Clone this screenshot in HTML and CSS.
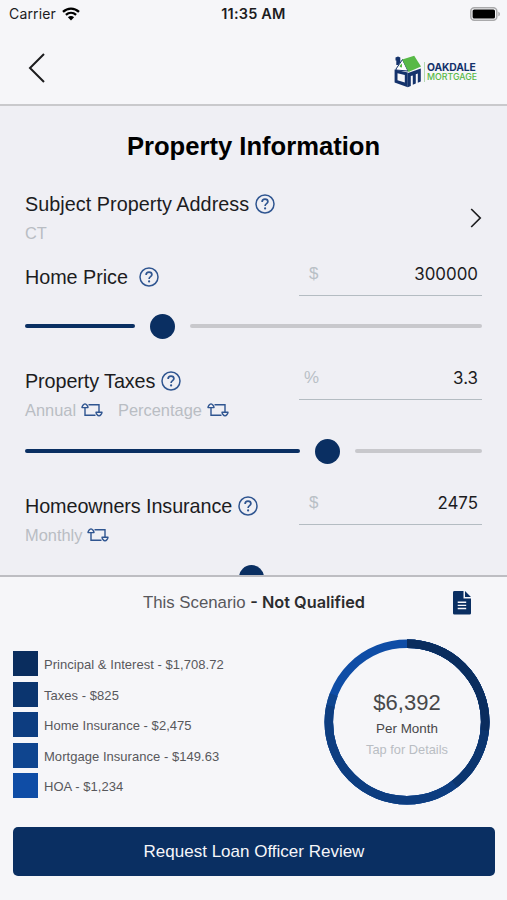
FILE: index.html
```html
<!DOCTYPE html>
<html lang="en">
<head>
  <meta charset="utf-8">
  <title>Property Information</title>
  <link rel="stylesheet" href="styles.css">
</head>
<body>
  <svg class="defs" width="0" height="0">
    <symbol id="help" viewBox="0 0 20 20">
      <circle cx="10" cy="10" r="9" fill="none" stroke="currentColor" stroke-width="1.5"/>
      <path d="M7.1 7.9C7.1 6.2 8.3 5.2 10 5.2s2.9 1 2.9 2.5c0 2-2.8 2-2.8 4.2" fill="none" stroke="currentColor" stroke-width="1.7"/>
      <circle cx="10.1" cy="14.4" r="1.1" fill="currentColor"/>
    </symbol>
    <symbol id="swap" viewBox="0 0 22 14">
      <path d="M4 4.5V12.2H14.5M7.5 1.8H18V9.5" fill="none" stroke="currentColor" stroke-width="1.4"/>
      <path d="M1 4.6C1 3.2 2.6 1 4 .9C5.4 1 7 3.2 7 4.6ZM15 9.2H21C21 10.6 19.4 12.8 18 12.9C16.6 12.8 15 10.6 15 9.2Z" fill="#efeff4" stroke="currentColor" stroke-width="1.4" stroke-linejoin="round"/>
    </symbol>
  </svg>

  <div class="status">
    <div class="carrier">Carrier
      <svg width="18" height="14" viewBox="0 0 18 14">
        <path d="M1 4.8C5.6.5 12.4.5 17 4.8M3.9 7.8C6.9 5.1 11.1 5.1 14.1 7.8" fill="none" stroke="#000" stroke-width="2.3"/>
        <path d="M5.9 10.3C7.7 8.7 10.3 8.7 12.1 10.3L9 13.4Z"/>
      </svg>
    </div>
    <div class="time">11:35 AM</div>
    <svg class="battery" width="31" height="14" viewBox="0 0 31 14">
      <rect x=".8" y=".8" width="26" height="12.4" rx="3.5" fill="#f6f6f9" stroke="#a9a9ab" stroke-width="1.5"/>
      <rect x="2.6" y="2.4" width="22.4" height="9.2" rx="1.6"/>
      <path d="M28.3 4.7C30.5 5.4 30.5 8.6 28.3 9.3Z" fill="#a9a9ab"/>
    </svg>
  </div>

  <div class="navbar">
    <svg width="18" height="32" viewBox="0 0 18 32">
      <path d="M16 2L2 16L16 30" fill="none" stroke="#1c1c1e" stroke-width="2"/>
    </svg>
    <div class="logo">
      <svg width="28" height="34" viewBox="0 0 28 34">
        <path d="M1.5 2.5L4 1.5L6.3 2.5V7L4.5 10H2.3V5.5H1.5Z" fill="#14326b"/>
        <path d="M2 14L8.5 4.5L14 16L2 15Z" fill="#fff" stroke="#14326b" stroke-width="1"/>
        <path d="M5.8 10.5L8 8.5V12.5L5.8 12Z" fill="#58b947"/>
        <path d="M8.2 4.5L20.2 .8L27 11.5L14.5 17Z" fill="#58b947"/>
        <path d="M.6 14.5L13.8 17.5V32.3L.6 27.5ZM3.5 18.2V25.2L10.8 27.6V20Z" fill="#14326b" fill-rule="evenodd"/>
        <path d="M14 18L26.8 13.5V26.5L23.8 27.8V18.5L21.8 19.2V28.5L18.8 29.8V20.4L16.8 21V31L13.8 32.3Z" fill="#14326b"/>
      </svg>
      <div class="logo-text">
        <div class="oakdale">OAKDALE</div>
        <div class="mortgage">MORTGAGE</div>
      </div>
    </div>
  </div>

  <div class="content">
    <h1>Property Information</h1>

    <div class="row address">
      <div>
        <div class="label">Subject Property Address <svg class="help"><use href="#help"/></svg></div>
        <div class="sub">CT</div>
      </div>
      <svg class="chevron" width="12" height="20" viewBox="0 0 12 20">
        <path d="M1.2 1L10.2 10L1.2 19" fill="none" stroke="#1c1c1e" stroke-width="1.7"/>
      </svg>
    </div>

    <div class="row price">
      <div class="label wide">Home Price <svg class="help"><use href="#help"/></svg></div>
      <div class="field"><span class="unit dollar">$</span><span>300000</span></div>
    </div>
    <div class="slider">
      <div class="filled" style="width:110px"></div>
      <div class="knob"></div>
      <div class="rest"></div>
    </div>

    <div class="row taxes">
      <div>
        <div class="label tight">Property Taxes <svg class="help"><use href="#help"/></svg></div>
        <div class="sub">Annual <svg class="swap"><use href="#swap"/></svg><span class="second">Percentage</span> <svg class="swap"><use href="#swap"/></svg></div>
      </div>
      <div class="field"><span class="unit">%</span><span>3.3</span></div>
    </div>
    <div class="slider">
      <div class="filled" style="width:275px"></div>
      <div class="knob"></div>
      <div class="rest"></div>
    </div>

    <div class="row insurance">
      <div>
        <div class="label tight">Homeowners Insurance <svg class="help"><use href="#help"/></svg></div>
        <div class="sub">Monthly <svg class="swap"><use href="#swap"/></svg></div>
      </div>
      <div class="field"><span class="unit dollar">$</span><span>2475</span></div>
    </div>
    <div class="slider last">
      <div class="filled" style="width:199px"></div>
      <div class="knob"></div>
      <div class="rest"></div>
    </div>
  </div>

  <div class="summary">
    <div class="scenario">
      <div><span class="this">This Scenario</span> <b>- Not Qualified</b></div>
      <svg class="doc" width="18" height="24" viewBox="0 0 18 24">
        <path d="M1.5 0H10.5V7.5H18V22.3Q18 23.6 16.6 23.6H1.4Q0 23.6 0 22.2V1.4Q0 0 1.5 0ZM12 0L18 6H12Z" fill="#0a2f62"/>
        <path d="M4.7 11.3H13.2M4.7 14.4H13.2M4.7 17.5H13.2" stroke="#f6f6f9" stroke-width="1.4"/>
      </svg>
    </div>

    <div class="breakdown">
      <ul class="legend">
        <li><i class="c1"></i><span>Principal &amp; Interest - $1,708.72</span></li>
        <li><i class="c2"></i><span>Taxes - $825</span></li>
        <li><i class="c3"></i><span>Home Insurance - $2,475</span></li>
        <li><i class="c4"></i><span>Mortgage Insurance - $149.63</span></li>
        <li><i class="c5"></i><span>HOA - $1,234</span></li>
      </ul>
      <div class="donut">
        <svg width="166" height="166" viewBox="0 0 166 166">
          <g fill="none" stroke-width="8.5" transform="rotate(-90 83 83)">
            <circle cx="83" cy="83" r="78.2" stroke="#0f4da6"/>
            <circle cx="83" cy="83" r="78.2" stroke="#0f458f" pathLength="100" stroke-dasharray="80.7 100"/>
            <circle cx="83" cy="83" r="78.2" stroke="#0d3d80" pathLength="100" stroke-dasharray="78.3 100"/>
            <circle cx="83" cy="83" r="78.2" stroke="#0b356f" pathLength="100" stroke-dasharray="39.6 100"/>
            <circle cx="83" cy="83" r="78.2" stroke="#0a2d5e" pathLength="100" stroke-dasharray="26.7 100"/>
          </g>
        </svg>
        <div class="total">
          <div class="amount">$6,392</div>
          <div class="per">Per Month</div>
          <div class="tap">Tap for Details</div>
        </div>
      </div>
    </div>

    <button class="request">Request Loan Officer Review</button>
  </div>
</body>
</html>
```
FILE: styles.css
```css
* {box-sizing:border-box;}
body {margin:0; width:507px; height:900px; overflow:hidden; background:#f6f6f9; color:#1c1c1e; font-family:"Liberation Sans",Arial,sans-serif; font-size:17px;}
svg {display:block; flex:none;}
.defs {position:absolute;}

.status {display:grid; grid-template-columns:1fr auto 1fr; align-items:center; height:27px; padding:0 6px 0 9px; font-family:Inter,sans-serif; font-size:14px;}
.carrier {display:flex; align-items:center; gap:6px; letter-spacing:.15px;}
.time {font-weight:600; font-size:14.5px; letter-spacing:.2px; margin-right:3px;}
.battery {justify-self:end;}

.navbar {display:flex; align-items:center; justify-content:space-between; height:79px; padding:5px 29px 0 28px; border-bottom:2px solid #c9c9cc;}
.logo {display:flex; align-items:center; gap:2px; padding-top:7px;}
.logo-text {border-left:1px solid #b5d9b0; padding-left:2px; width:54px; font-family:Inter,sans-serif; white-space:nowrap;}
.oakdale {font-size:10.3px; line-height:10px; font-weight:700; letter-spacing:-.1px; color:#14326b;}
.mortgage {font-size:8.8px; line-height:10px; color:#58b947; font-weight:500;}

.content {height:469px; overflow:hidden; padding:0 25px; background:#efeff4;}
h1 {margin:0; height:81px; padding-top:24px; line-height:33px; font-size:25.6px; text-align:center; color:#000;}
.row {display:flex; justify-content:space-between; align-items:flex-start;}
.label {display:flex; align-items:center; gap:6px; height:24px; font-size:19.8px; letter-spacing:.04px; white-space:nowrap;}
.wide {gap:11px; letter-spacing:-.05px;}
.tight {letter-spacing:-.09px;}
.help {width:20px; height:20px; color:#2f5590;}
.sub {display:flex; align-items:center; gap:5px; height:22px; margin-top:6px; font-size:16.4px; color:#b9bdc3;}
.swap {width:22px; height:14px; color:#2f5590;}
.second {margin-left:10px;}
.address {height:70px; padding-top:5px;}
.chevron {margin-top:16px;}
.price {height:44px; padding-top:8px;}
.price .field {margin-top:-8px;}
.taxes {height:75px; padding-top:18px;}
.insurance {height:76px; padding-top:18px;}
.taxes .field, .insurance .field {margin-top:-8px;}
.field {display:flex; justify-content:space-between; align-items:center; width:183px; height:39px; padding:0 4px 4px 5px; border-bottom:1px solid #b4bcc2; font-family:Inter,sans-serif; font-size:16.9px;}
.unit {font-family:"Liberation Sans",Arial,sans-serif; color:#b9c0c6;}
.dollar {padding-left:5px;}

.slider {display:flex; align-items:center; height:50px; gap:15px;}
.filled, .rest {height:4px; border-radius:2px;}
.filled {flex:none; background:#0a2f62;}
.rest {flex:1; background:#c8c8cc;}
.knob {flex:none; width:25px; height:25px; border-radius:50%; background:#0a2f62;}
.last .filled, .last .rest {visibility:hidden;}

.summary {height:325px; padding:0 12px 0 13px; border-top:2px solid #bdbdc2;}
.scenario {position:relative; height:60px; padding-top:13px; text-align:center; line-height:24px;}
.this {font-size:16.8px; color:#58585c;}
.scenario b {font-family:Inter,sans-serif; font-size:16.3px; font-weight:600; color:#2c2c2e;}
.doc {position:absolute; right:24px; top:14px;}

.breakdown {display:flex; justify-content:space-between; height:190px;}
.legend {list-style:none; margin:0; padding:14px 0 0; display:flex; flex-direction:column; gap:5.6px;}
.legend li {display:flex; align-items:center; gap:6px; height:25px; font-size:13px; letter-spacing:.04px; color:#58585c;}
.legend span {padding-top:2px;}
.legend i {width:25px; height:25px;}
.c1 {background:#0a2d5e;}
.c2 {background:#0b356f;}
.c3 {background:#0d3d80;}
.c4 {background:#0f458f;}
.c5 {background:#0f4da6;}
.donut {display:grid; width:166px; height:166px; margin:2px 5px 0 0;}
.donut > * {grid-area:1/1;}
.total {text-align:center; padding-top:51px;}
.amount {font-size:22px; line-height:26px; color:#48484a;}
.per {font-size:13.4px; line-height:26px; color:#48484a;}
.tap {font-size:12.8px; line-height:16px; color:#b9bdc3;}

.request {display:block; width:482px; height:49px; border:0; border-radius:5px; background:#0a2f62; color:#f6f6f9; font-family:"Liberation Sans",Arial,sans-serif; font-size:17px;}
```
